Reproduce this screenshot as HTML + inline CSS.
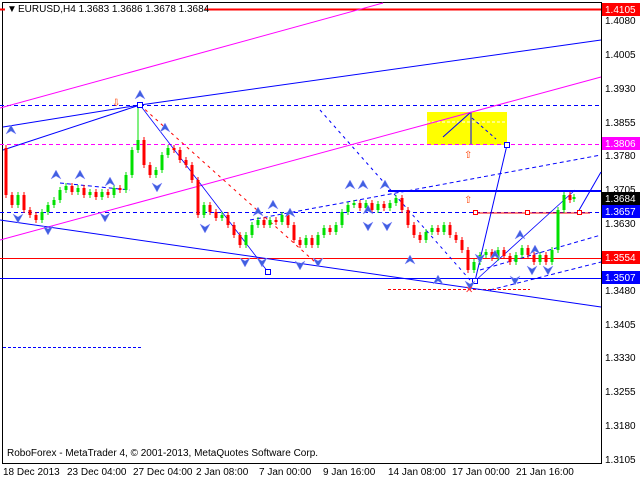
<!DOCTYPE html>
<html><head><style>
body{margin:0;background:#fff;width:640px;height:480px;overflow:hidden;font-family:"Liberation Sans",sans-serif}
svg{display:block}
text{font-family:"Liberation Sans",sans-serif;font-size:10px}
</style></head><body>
<svg width="640" height="480" xmlns="http://www.w3.org/2000/svg">
<defs>
<path id="up" d="M-5 4 L0 -5 L5 4 L0 1Z" fill="#4060e0" stroke="#9090ff" stroke-width="0.5"/>
<path id="dn" d="M-5 -4 L0 5 L5 -4 L0 -1Z" fill="#4060e0" stroke="#9090ff" stroke-width="0.5"/>
</defs>
<rect width="640" height="480" fill="#fff"/>
<line x1="2.5" y1="2" x2="2.5" y2="464" stroke="#000"/>
<line x1="601.5" y1="2" x2="601.5" y2="464" stroke="#000"/>
<line x1="2" y1="463.5" x2="602" y2="463.5" stroke="#000"/>
<line x1="2" y1="2.5" x2="602" y2="2.5" stroke="#000"/>
<rect x="427" y="112" width="80" height="33" fill="#ffff00"/>
<line x1="427" y1="122" x2="507" y2="122" stroke="#fff" stroke-dasharray="3,2"/>
<line x1="443" y1="137" x2="471" y2="112" stroke="#0000ff"/>
<line x1="471" y1="112" x2="471" y2="145" stroke="#0000ff"/>
<line x1="472" y1="118" x2="496" y2="139" stroke="#0000ff" stroke-dasharray="3,3"/>
<line x1="0" y1="9.5" x2="601" y2="9.5" stroke="#ff0000" stroke-width="2"/>
<line x1="0" y1="105.5" x2="601" y2="105.5" stroke="#0000ff" stroke-dasharray="4,3"/>
<line x1="0" y1="144.5" x2="601" y2="144.5" stroke="#ff00ff" stroke-dasharray="4,3"/>
<line x1="0" y1="212.5" x2="601" y2="212.5" stroke="#0000ff" stroke-dasharray="4,3"/>
<line x1="0" y1="258.5" x2="601" y2="258.5" stroke="#ff0000"/>
<line x1="0" y1="278.5" x2="601" y2="278.5" stroke="#0000ff"/>
<line x1="3" y1="347.5" x2="143" y2="347.5" stroke="#0000ff" stroke-dasharray="3,2"/>
<line x1="388" y1="289.5" x2="530" y2="289.5" stroke="#ff0000" stroke-dasharray="3,2"/>
<line x1="388" y1="191" x2="601" y2="191" stroke="#0000ff" stroke-width="2"/>
<line x1="475" y1="213" x2="590" y2="213" stroke="#ff0000"/>
<line x1="0" y1="108" x2="383" y2="3" stroke="#ff00ff"/>
<line x1="0" y1="240" x2="601" y2="77" stroke="#ff00ff"/>
<line x1="3" y1="127" x2="140" y2="105" stroke="#0000ff"/>
<line x1="140" y1="105" x2="601" y2="40" stroke="#0000ff"/>
<line x1="3" y1="150" x2="140" y2="105" stroke="#0000ff"/>
<line x1="0" y1="220" x2="601" y2="307" stroke="#0000ff"/>
<line x1="250" y1="220" x2="601" y2="155" stroke="#0000ff" stroke-dasharray="4,3"/>
<line x1="140" y1="105" x2="268" y2="272" stroke="#0000ff" stroke-width="0.8"/>
<line x1="140" y1="105" x2="315" y2="262" stroke="#ff0000" stroke-dasharray="3,4"/>
<line x1="320" y1="110" x2="470" y2="280" stroke="#0000ff" stroke-dasharray="3,4"/>
<line x1="475" y1="281" x2="507" y2="145" stroke="#0000ff"/>
<line x1="475" y1="281" x2="575" y2="190" stroke="#0000ff" stroke-width="0.8"/>
<line x1="578" y1="212" x2="601" y2="172" stroke="#0000ff"/>
<line x1="480" y1="270" x2="601" y2="235" stroke="#0000ff" stroke-dasharray="4,3"/>
<line x1="490" y1="290" x2="601" y2="262" stroke="#0000ff" stroke-dasharray="4,3"/>
<line x1="60" y1="183" x2="130" y2="190" stroke="#0000ff" stroke-dasharray="4,3"/>
<!-- green candles -->
<path stroke="#00e000" stroke-width="1" fill="none" d="M18 192V208M42 209V223M48 202V215M54 197V208M60 187V203M66 183V193M78 185V195M90 189V198M102 189V200M114 185V198M126 172V193M132 147V178M138 105V153M156 167V178M162 152V173M168 145V158M204 202V218M222 212V221M246 232V248M252 222V238M258 217V228M270 217V228M282 212V225M306 235V248M318 232V248M324 225V238M336 222V235M342 209V228M348 202V215M354 200V208M366 200V211M378 201V213M390 200V211M396 195V206M426 229V243M432 225V235M444 222V235M474 259V273M480 252V265M486 249V258M498 247V261M516 252V265M522 245V258M540 252V265M552 247V265M558 207V253M564 192V213M574 194V202"/>
<path stroke="#00e000" stroke-width="3" fill="none" d="M18 195V205M42 212V220M48 205V212M54 200V205M60 190V200M66 186V190M78 188V192M90 192V195M102 192V197M114 188V195M126 175V190M132 150V175M138 140V150M156 170V175M162 155V170M168 148V155M204 205V215M222 215V218M246 235V245M252 225V235M258 220V225M270 220V225M282 215V222M306 238V245M318 235V245M324 228V235M336 225V232M342 212V225M348 205V212M354 203V205M366 203V208M378 204V210M390 203V208M396 198V203M426 232V240M432 228V232M444 225V232M474 262V270M480 255V262M486 252V255M498 250V258M516 255V262M522 248V255M540 255V262M552 250V262M558 210V250M564 195V210M574 197V199"/>
<!-- red candles -->
<path stroke="#ff0000" stroke-width="1" fill="none" d="M6 145V198M12 192V208M24 192V213M30 207V218M36 212V223M72 183V195M84 185V198M96 189V200M108 189V198M120 185V193M144 137V168M150 162V178M174 145V153M180 147V163M186 157V168M192 162V183M198 177V218M210 202V215M216 209V221M228 212V228M234 222V238M240 232V248M264 217V228M276 217V225M288 212V228M294 222V243M300 237V248M312 235V248M330 225V235M360 200V211M372 200V213M384 201V211M402 195V213M408 207V228M414 222V238M420 232V243M438 225V235M450 222V238M456 232V243M462 237V253M468 247V273M492 249V261M504 247V259M510 253V265M528 245V258M534 252V265M546 252V265M570 192V203"/>
<path stroke="#ff0000" stroke-width="3" fill="none" d="M6 148V195M12 195V205M24 195V210M30 210V215M36 215V220M72 186V192M84 188V195M96 192V197M108 192V195M120 188V190M144 140V165M150 165V175M174 148V150M180 150V160M186 160V165M192 165V180M198 180V215M210 205V212M216 212V218M228 215V225M234 225V235M240 235V245M264 220V225M276 220V222M288 215V225M294 225V240M300 240V245M312 238V245M330 228V232M360 203V208M372 203V210M384 204V208M402 198V210M408 210V225M414 225V235M420 235V240M438 228V232M450 225V235M456 235V240M462 240V250M468 250V270M492 252V258M504 250V256M510 256V262M528 248V255M534 255V262M546 255V262M570 195V200"/>
<rect x="137.5" y="102.5" width="5" height="5" fill="#fff" stroke="#0000ff"/>
<rect x="265.5" y="269.5" width="5" height="5" fill="#fff" stroke="#0000ff"/>
<rect x="504.5" y="142.5" width="5" height="5" fill="#fff" stroke="#0000ff"/>
<rect x="472.5" y="278.5" width="5" height="5" fill="#fff" stroke="#0000ff"/>
<rect x="473.5" y="210.5" width="4" height="4" fill="#fff" stroke="#ff0000"/>
<rect x="525.5" y="210.5" width="4" height="4" fill="#fff" stroke="#ff0000"/>
<rect x="577.5" y="210.5" width="4" height="4" fill="#fff" stroke="#ff0000"/>
<!-- markers -->
<use href="#up" x="11" y="130"/><use href="#up" x="56" y="175"/><use href="#up" x="80" y="175"/><use href="#up" x="110" y="182"/><use href="#up" x="140" y="95"/><use href="#up" x="165" y="128"/>
<use href="#dn" x="18" y="218"/><use href="#dn" x="48" y="230"/><use href="#dn" x="105" y="217"/><use href="#dn" x="157" y="187"/><use href="#dn" x="205" y="228"/>
<use href="#up" x="258" y="212"/><use href="#up" x="273" y="205"/><use href="#up" x="290" y="213"/>
<use href="#dn" x="245" y="262"/><use href="#dn" x="262" y="262"/><use href="#dn" x="300" y="265"/><use href="#dn" x="318" y="262"/>
<use href="#up" x="350" y="185"/><use href="#up" x="363" y="185"/><use href="#up" x="385" y="185"/><use href="#up" x="368" y="210"/>
<use href="#dn" x="368" y="226"/><use href="#dn" x="387" y="226"/>
<use href="#up" x="410" y="260"/><use href="#up" x="438" y="280"/><use href="#dn" x="480" y="258"/><use href="#up" x="495" y="255"/>
<use href="#up" x="520" y="235"/><use href="#up" x="535" y="250"/><use href="#dn" x="515" y="280"/><use href="#dn" x="532" y="270"/><use href="#dn" x="548" y="270"/><use href="#dn" x="470" y="285"/>
<text x="112" y="106" fill="#ff4000" font-size="12">⇩</text>
<text x="464" y="158" fill="#ff4000" font-size="12">⇧</text>
<text x="464" y="203" fill="#ff4000" font-size="12">⇧</text>
<text x="465" y="293" fill="#ff3030" font-size="10">✕</text>
<rect x="5" y="3" width="200" height="12" fill="#fff"/>
<text x="7" y="12" fill="#000" font-size="8">▼</text>
<text x="18" y="12" fill="#000">EURUSD,H4  1.3683 1.3686 1.3678 1.3684</text>
<text x="7" y="456" fill="#000">RoboForex - MetaTrader 4, © 2001-2013, MetaQuotes Software Corp.</text>
<g fill="#000">
<text x="605" y="24">1.4080</text><text x="605" y="58">1.4005</text><text x="605" y="92">1.3930</text>
<text x="605" y="126">1.3855</text><text x="605" y="159">1.3780</text><text x="605" y="193">1.3705</text>
<text x="605" y="227">1.3630</text><text x="605" y="294">1.3480</text><text x="605" y="328">1.3405</text>
<text x="605" y="361">1.3330</text><text x="605" y="395">1.3255</text><text x="605" y="429">1.3180</text>
<text x="605" y="463">1.3105</text>
</g>
<rect x="602" y="3" width="38" height="13" fill="#ff0000"/><text x="605" y="13" fill="#fff">1.4105</text>
<rect x="602" y="137" width="38" height="13" fill="#ff00ff"/><text x="605" y="147" fill="#fff">1.3806</text>
<rect x="602" y="192" width="38" height="13" fill="#000"/><text x="605" y="202" fill="#fff">1.3684</text>
<rect x="602" y="205" width="38" height="13" fill="#0000ff"/><text x="605" y="215" fill="#fff">1.3657</text>
<rect x="602" y="251" width="38" height="13" fill="#ff0000"/><text x="605" y="261" fill="#fff">1.3554</text>
<rect x="602" y="271" width="38" height="13" fill="#0000ff"/><text x="605" y="281" fill="#fff">1.3507</text>
<g fill="#000">
<text x="3" y="475">18 Dec 2013</text><text x="67" y="475">23 Dec 04:00</text><text x="133" y="475">27 Dec 04:00</text>
<text x="196" y="475">2 Jan 08:00</text><text x="259" y="475">7 Jan 00:00</text><text x="323" y="475">9 Jan 16:00</text>
<text x="388" y="475">14 Jan 08:00</text><text x="452" y="475">17 Jan 00:00</text><text x="516" y="475">21 Jan 16:00</text>
</g>
</svg>
</body></html>
